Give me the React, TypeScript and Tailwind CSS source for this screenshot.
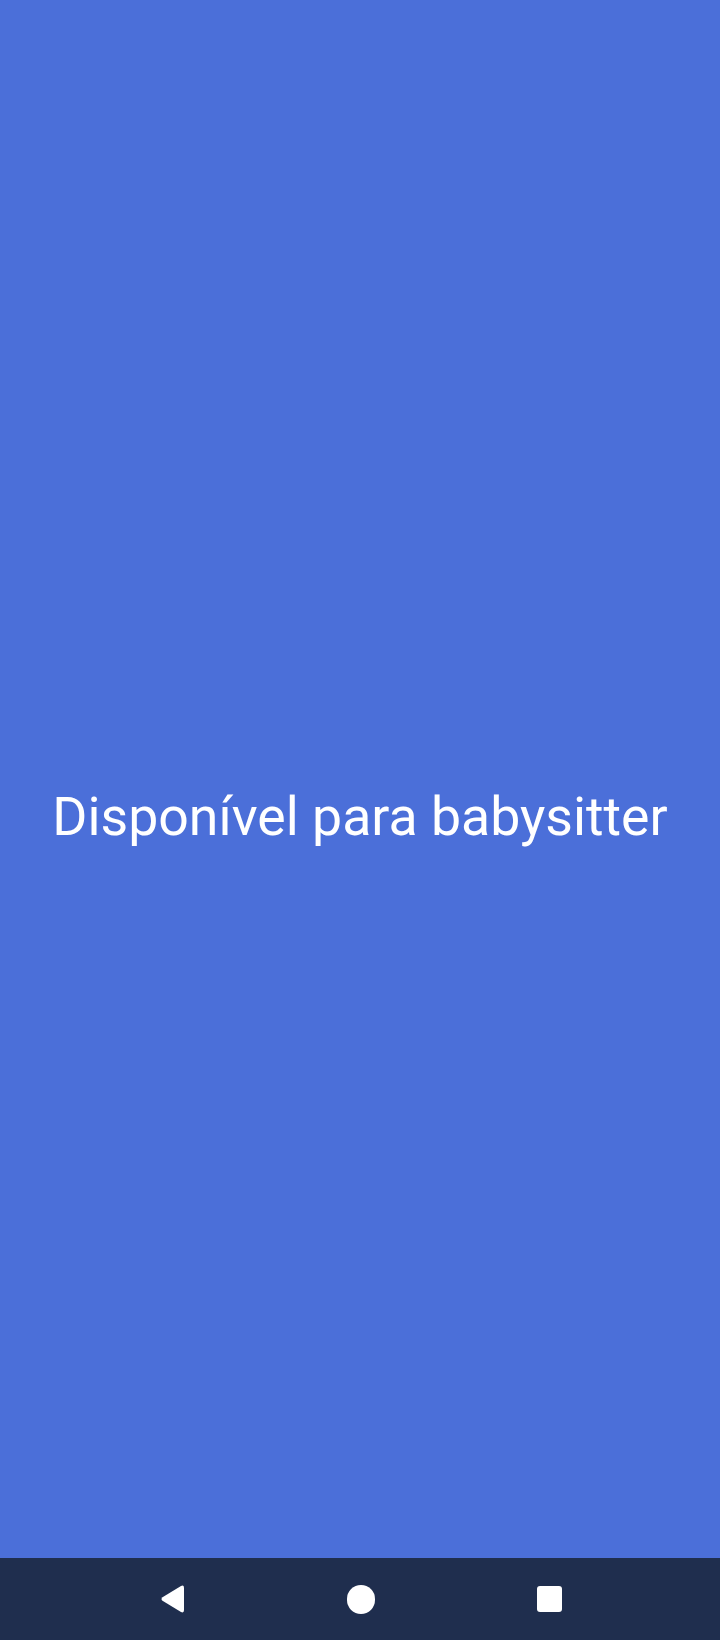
import React from 'react';

const NavBar: React.FC = () => (
  <div className="h-[82px] bg-[#1f2e4e] flex items-center justify-center gap-[162px]">
    <svg width="26" height="30" viewBox="0 0 26 30">
      <path
        d="M22 2 L3.5 13.2 Q1.5 15 3.5 16.8 L22 28 Q25 29.5 25 26 L25 4 Q25 0.5 22 2 Z"
        fill="white"
      />
    </svg>
    <div className="w-[28px] h-[29px] rounded-full bg-white" />
    <div className="w-[25px] h-[26px] rounded-[3px] bg-white" />
  </div>
);

const App: React.FC = () => (
  <div className="w-[720px] h-[1640px] flex flex-col bg-[#4b6fd9] font-['Roboto',sans-serif]">
    <div className="flex-1 flex items-center justify-center pt-[76px]">
      <p className="text-white text-[53.6px] leading-none">Disponível para babysitter</p>
    </div>
    <NavBar />
  </div>
);

export default App;
